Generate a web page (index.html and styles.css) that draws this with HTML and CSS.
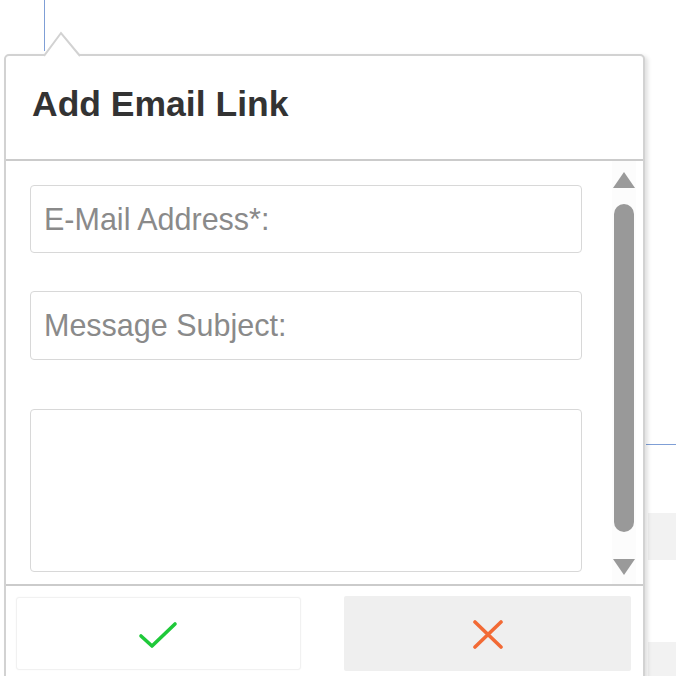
FILE: index.html
```html
<!DOCTYPE html>
<html lang="en">
<head>
<meta charset="utf-8">
<title>Add Email Link</title>
<link rel="stylesheet" href="styles.css">
</head>
<body>
<div class="stage">
  <div class="guide-v"></div>
  <div class="guide-h"></div>
  <div class="bg-bar bg-bar-1"></div>
  <div class="bg-bar bg-bar-2"></div>

  <div class="popup">
    <svg class="pointer" width="40" height="26" viewBox="0 0 40 26">
      <path d="M0 25 L17 2 L36 25" fill="#fff" stroke="#d2d2d2" stroke-width="2"/>
    </svg>
    <div class="popup-header">
      <h1 class="title">Add Email Link</h1>
    </div>
    <div class="popup-body">
      <div class="form">
        <div class="field field-email"><span class="placeholder">E-Mail Address*:</span></div>
        <div class="field field-subject"><span class="placeholder">Message Subject:</span></div>
        <div class="field field-message"></div>
      </div>
      <div class="scrollbar">
        <div class="arrow arrow-up"></div>
        <div class="thumb"></div>
        <div class="arrow arrow-down"></div>
      </div>
    </div>
    <div class="popup-footer">
      <button class="btn btn-ok" type="button" aria-label="OK">
        <svg width="40" height="30" viewBox="0 0 40 30">
          <path d="M3 16 L14 26 L37 4" fill="none" stroke="#1fc93a" stroke-width="3.6" stroke-linecap="round" stroke-linejoin="round"/>
        </svg>
      </button>
      <button class="btn btn-cancel" type="button" aria-label="Cancel">
        <svg width="32" height="30" viewBox="0 0 32 30">
          <path d="M3 2 L29 27 M29 2 L3 27" fill="none" stroke="#f26a35" stroke-width="3.6" stroke-linecap="round"/>
        </svg>
      </button>
    </div>
  </div>
</div>
</body>
</html>
```

FILE: styles.css
```css
html, body {
  margin: 0;
  padding: 0;
  background: #fff;
}

.stage {
  position: relative;
  width: 676px;
  height: 676px;
  overflow: hidden;
  background: #fff;
  font-family: "Liberation Sans", Arial, sans-serif;
}

.guide-v {
  position: absolute;
  left: 44px;
  top: 0;
  width: 1px;
  height: 51px;
  background: #7f9fd6;
}

.guide-h {
  position: absolute;
  left: 646px;
  top: 444px;
  width: 30px;
  height: 1px;
  background: #7f9fd6;
}

.bg-bar {
  position: absolute;
  left: 648px;
  width: 28px;
  background: #f2f2f2;
}

.bg-bar-1 {
  top: 513px;
  height: 47px;
}

.bg-bar-2 {
  top: 642px;
  height: 40px;
}

.popup {
  position: absolute;
  left: 4px;
  top: 54px;
  width: 641px;
  height: 640px;
  box-sizing: border-box;
  border: 2px solid #d2d2d2;
  border-radius: 5px 5px 0 0;
  background: #fff;
  box-shadow: 3px 2px 4px rgba(0, 0, 0, 0.12);
  display: flex;
  flex-direction: column;
}

.pointer {
  position: absolute;
  left: 38px;
  top: -25px;
}

.popup-header {
  height: 105px;
  border-bottom: 2px solid #cbcbcb;
  display: flex;
  align-items: center;
  padding: 0 0 6px 26px;
  box-sizing: border-box;
  flex: none;
}

.title {
  margin: 0;
  font-size: 35.5px;
  font-weight: bold;
  color: #333;
}

.popup-body {
  height: 423px;
  border-bottom: 2px solid #cbcbcb;
  display: flex;
  flex: none;
  box-sizing: content-box;
}

.form {
  width: 552px;
  padding: 24px 0 0 24px;
  display: flex;
  flex-direction: column;
}

.field {
  box-sizing: border-box;
  border: 1.5px solid #d8d8d8;
  border-radius: 4px;
  background: #fff;
  display: flex;
  align-items: center;
  padding-left: 13px;
}

.field-email {
  height: 68px;
}

.field-subject {
  height: 69px;
  margin-top: 38px;
}

.field-message {
  height: 163px;
  margin-top: 49px;
}

.placeholder {
  font-size: 30.5px;
  color: #8a8a8a;
}

.scrollbar {
  margin-left: auto;
  margin-right: 7px;
  width: 24px;
  display: flex;
  flex-direction: column;
  align-items: center;
  background: #fcfcfc;
}

.arrow {
  width: 0;
  height: 0;
  border-left: 11px solid transparent;
  border-right: 11px solid transparent;
}

.arrow-up {
  margin-top: 11px;
  border-bottom: 16px solid #9a9a9a;
}

.arrow-down {
  margin-top: 27px;
  border-top: 16px solid #9a9a9a;
}

.thumb {
  margin-top: 16px;
  width: 20px;
  height: 328px;
  border-radius: 10px;
  background: #999;
}

.popup-footer {
  display: flex;
  align-items: flex-start;
  padding: 10px 0 0 10px;
}

.btn {
  border: none;
  margin: 0;
  padding: 0;
  display: flex;
  align-items: center;
  justify-content: center;
  cursor: pointer;
}

.btn-ok {
  width: 285px;
  height: 73px;
  margin-top: 1px;
  background: #fff;
  border: 1px solid #f1f1f1;
  border-radius: 3px;
  box-shadow: 0 0 2px rgba(0, 0, 0, 0.04);
}

.btn-ok svg {
  margin-left: -1px;
  margin-top: 2px;
}

.btn-cancel {
  width: 287px;
  height: 75px;
  margin-left: 43px;
  background: #efefef;
  border-radius: 2px;
}

.btn-cancel svg {
  margin-top: 2px;
  margin-left: 1px;
}
```
